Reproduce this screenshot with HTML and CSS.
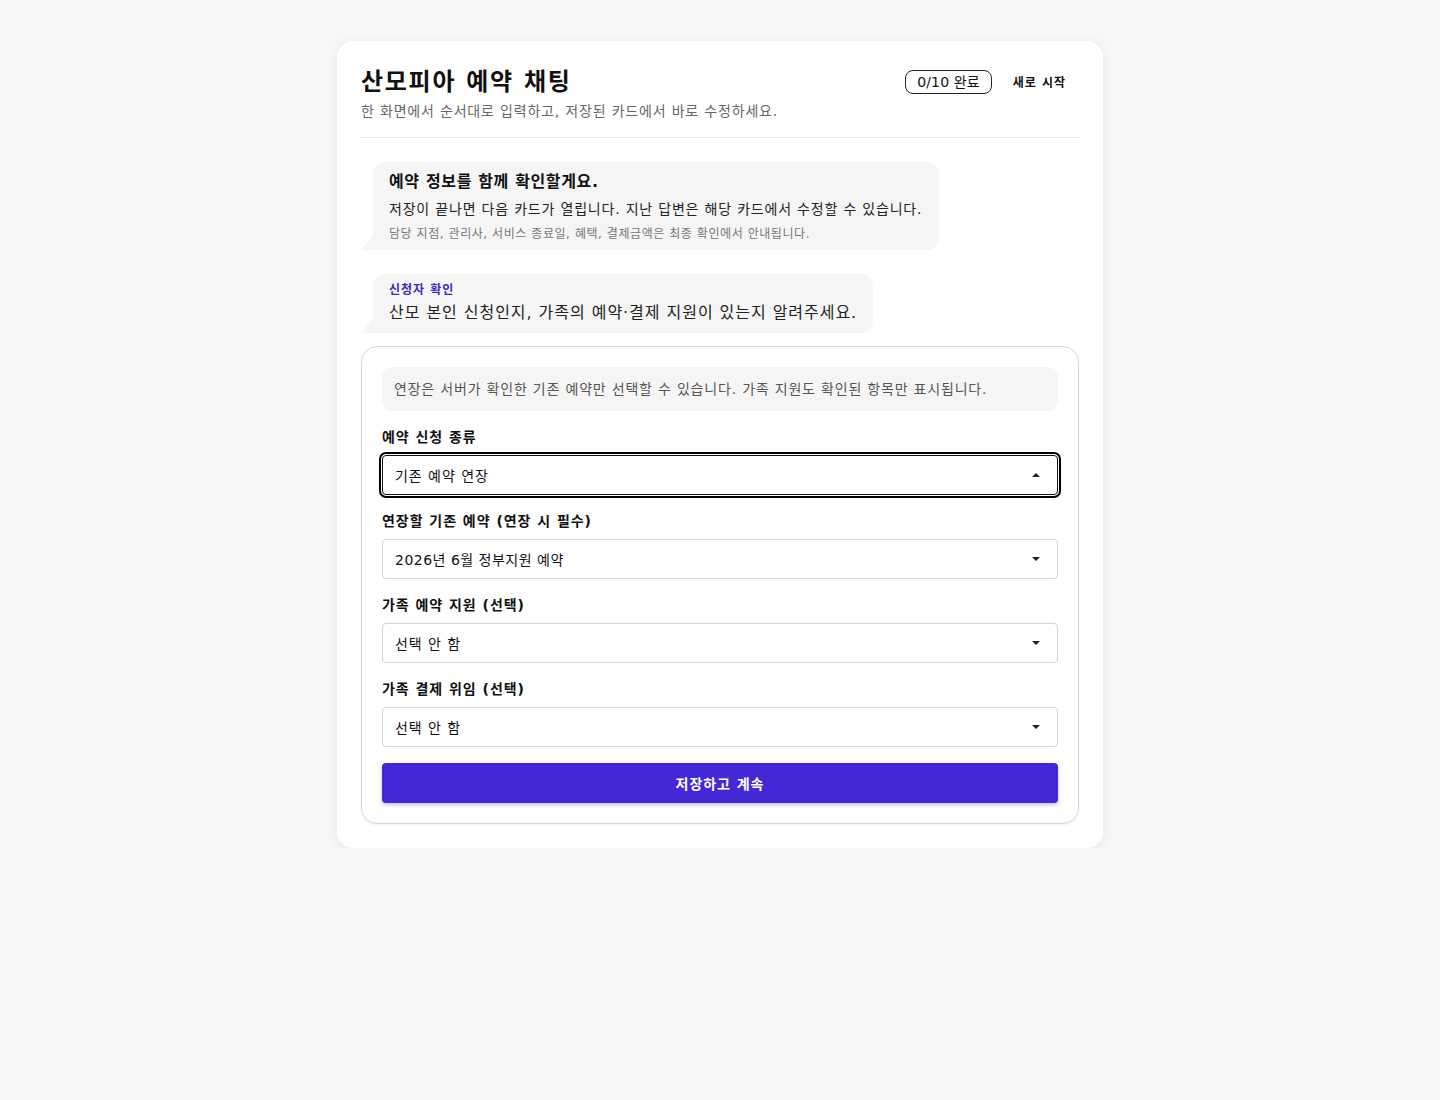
FILE: index.html
```html
<!DOCTYPE html>
<html lang="ko">
<head>
<meta charset="utf-8">
<title>산모피아 예약 채팅</title>
<link rel="stylesheet" href="styles.css">
</head>
<body>
<main class="card">
  <header class="head">
    <div class="head-text">
      <h1 class="title">산모피아 예약 채팅</h1>
      <p class="subtitle">한 화면에서 순서대로 입력하고, 저장된 카드에서 바로 수정하세요.</p>
    </div>
    <div class="head-actions">
      <span class="progress">0/10 완료</span>
      <button class="reset" type="button">새로 시작</button>
    </div>
  </header>

  <section class="chat">
    <div class="bubble intro">
      <p class="bubble-title">예약 정보를 함께 확인할게요.</p>
      <p class="bubble-body">저장이 끝나면 다음 카드가 열립니다. 지난 답변은 해당 카드에서 수정할 수 있습니다.</p>
      <p class="bubble-note">담당 지점, 관리사, 서비스 종료일, 혜택, 결제금액은 최종 확인에서 안내됩니다.</p>
    </div>
    <div class="bubble">
      <p class="bubble-tag">신청자 확인</p>
      <p class="bubble-q">산모 본인 신청인지, 가족의 예약·결제 지원이 있는지 알려주세요.</p>
    </div>

    <form class="form">
      <p class="notice">연장은 서버가 확인한 기존 예약만 선택할 수 있습니다. 가족 지원도 확인된 항목만 표시됩니다.</p>
      <div class="field">
        <label class="label">예약 신청 종류</label>
        <div class="select focused"><span>기존 예약 연장</span><span class="caret up"></span></div>
      </div>
      <div class="field">
        <label class="label">연장할 기존 예약 (연장 시 필수)</label>
        <div class="select"><span class="value-num">2026년 6월 정부지원 예약</span><span class="caret"></span></div>
      </div>
      <div class="field">
        <label class="label">가족 예약 지원 (선택)</label>
        <div class="select"><span>선택 안 함</span><span class="caret"></span></div>
      </div>
      <div class="field">
        <label class="label">가족 결제 위임 (선택)</label>
        <div class="select"><span>선택 안 함</span><span class="caret"></span></div>
      </div>
      <button class="submit" type="button">저장하고 계속</button>
    </form>
  </section>
</main>
</body>
</html>
```

FILE: styles.css
```css
* { box-sizing: border-box; }
html, body { margin: 0; padding: 0; }
body {
  background: #f7f7f7;
  font-family: "DejaVu Sans", "Noto Sans CJK KR", sans-serif;
  letter-spacing: 0.06em;
  color: #111;
  padding-top: 41px;
}
p { margin: 0; }
.card {
  width: 766px;
  margin: 0 auto;
  background: #fff;
  border-radius: 16px;
  box-shadow: 0 2px 10px rgba(0,0,0,0.08);
  padding: 24px;
}
.head {
  display: flex;
  justify-content: space-between;
  align-items: flex-start;
  padding-bottom: 16px;
  border-bottom: 1px solid #e8e8e8;
}
.title {
  margin: 0;
  padding-top: 1px;
  font-size: 24px;
  font-weight: 700;
  line-height: 32px;
  letter-spacing: 0.072em;
}
.subtitle {
  margin-top: 3px;
  font-size: 14px;
  color: #666;
  line-height: 20px;
  letter-spacing: 0.058em;
}
.head-actions {
  display: flex;
  align-items: center;
  gap: 9px;
  margin-top: 4px;
  margin-right: 1px;
}
.progress {
  display: inline-block;
  border: 1px solid #222;
  border-radius: 8px;
  padding: 1px 11px;
  font-size: 14px;
  line-height: 20px;
  letter-spacing: 0.01em;
}
.reset {
  border: 0;
  background: transparent;
  font-family: inherit;
  letter-spacing: inherit;
  font-size: 12px;
  font-weight: 700;
  color: #111;
  padding: 4px 12px;
  cursor: pointer;
}
.chat {
  padding-top: 24px;
  display: flex;
  flex-direction: column;
  align-items: flex-start;
  gap: 24px;
}
.bubble {
  position: relative;
  margin-left: 12px;
  background: #f5f5f5;
  border-radius: 12px 12px 12px 0;
  padding: 8px 16px 8px;
}
.bubble.intro {
  padding: 9px 17px 8px 16px;
}
.bubble::before {
  content: "";
  position: absolute;
  left: -12px;
  bottom: 0;
  width: 12px;
  height: 14px;
  background: #f5f5f5;
  clip-path: polygon(100% 0, 100% 100%, 0 100%);
}
.bubble-title {
  font-size: 16px;
  font-weight: 700;
  line-height: 22px;
  letter-spacing: 0.04em;
}
.bubble-body {
  margin-top: 6px;
  font-size: 14px;
  line-height: 20px;
  color: #222;
  letter-spacing: 0.057em;
}
.bubble-note {
  margin-top: 7px;
  font-size: 12px;
  line-height: 16px;
  color: #777;
  letter-spacing: 0.047em;
}
.bubble-tag {
  font-size: 12px;
  font-weight: 700;
  color: #3b2bb8;
  line-height: 16px;
}
.bubble-q {
  margin-top: 3px;
  font-size: 16px;
  line-height: 24px;
  color: #222;
}
.form {
  align-self: stretch;
  margin-top: -11px;
  border: 1px solid #d6d3e6;
  border-radius: 16px;
  padding: 20px;
  display: flex;
  flex-direction: column;
  gap: 16px;
  box-shadow: 0 1px 2px rgba(0,0,0,0.06);
}
.notice {
  background: #f5f5f5;
  border-radius: 10px;
  padding: 12px 12px;
  font-size: 14px;
  line-height: 20px;
  color: #555;
  letter-spacing: 0.057em;
}
.field {
  display: flex;
  flex-direction: column;
  gap: 8px;
}
.label {
  font-size: 14px;
  font-weight: 700;
  line-height: 20px;
}
.select {
  height: 40px;
  border: 1px solid #d4d4d4;
  border-radius: 4px;
  display: flex;
  align-items: center;
  justify-content: space-between;
  padding: 0 17px 0 12px;
  font-size: 14px;
  color: #111;
  background: #fff;
}
.value-num {
  letter-spacing: 0.035em;
}
.select.focused {
  border-color: #111;
  outline: 2px solid #000;
  outline-offset: 1px;
}
.caret {
  width: 0;
  height: 0;
  border-left: 4px solid transparent;
  border-right: 4px solid transparent;
  border-top: 4px solid #222;
}
.caret.up {
  border-top: 0;
  border-bottom: 4px solid #222;
}
.submit {
  height: 40px;
  border: 0;
  border-radius: 4px;
  background: #4329d6;
  color: #fff;
  font-family: inherit;
  letter-spacing: inherit;
  font-size: 14px;
  font-weight: 700;
  box-shadow: 0 2px 4px rgba(67,41,214,0.3);
  cursor: pointer;
}
```
